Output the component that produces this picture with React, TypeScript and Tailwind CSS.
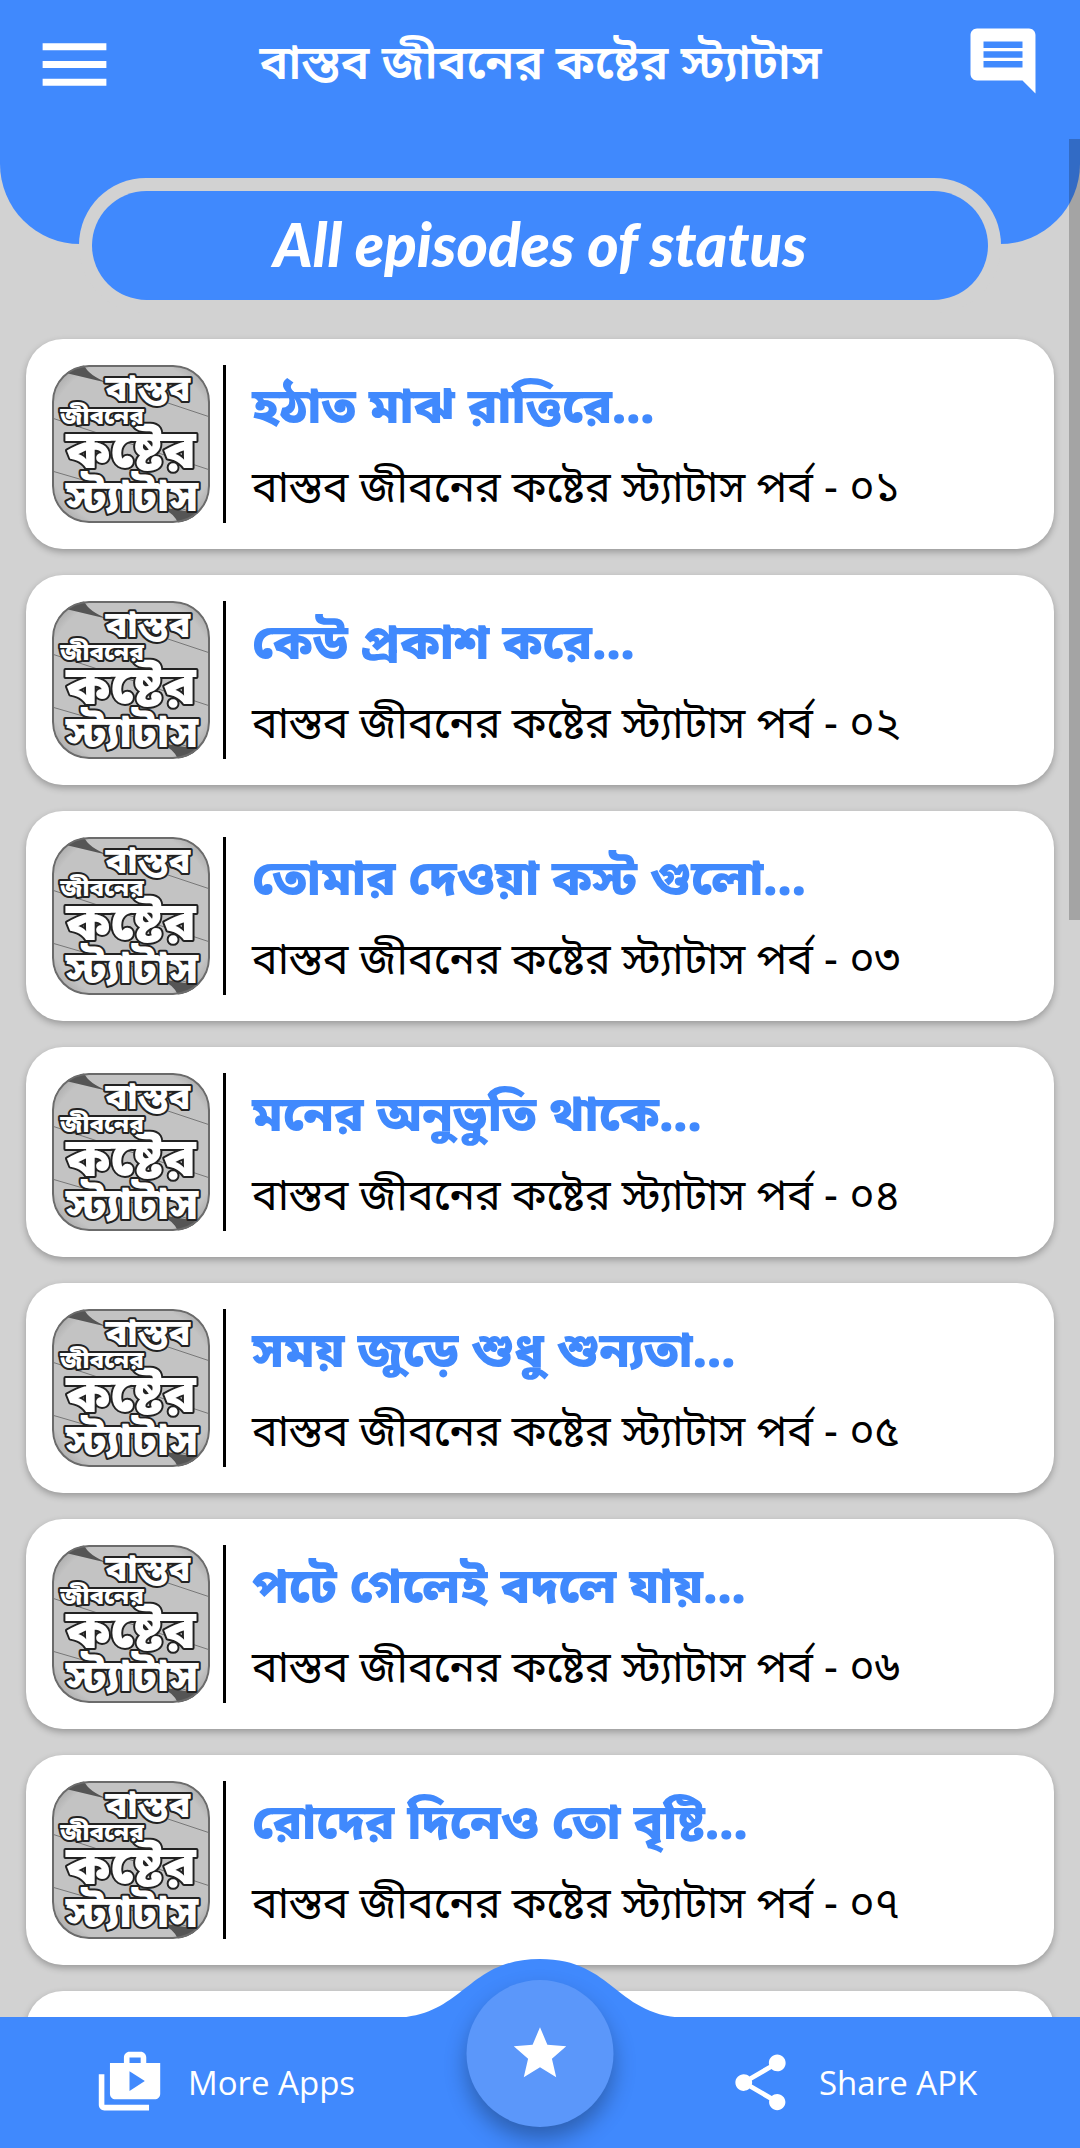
import { MdComment, MdMenu, MdShare, MdShop2, MdStar } from "react-icons/md";

interface Episode {
  id: number;
  title: string;
  no: string;
}

const episodes: Episode[] = [
  { id: 1, title: "হঠাত মাঝ রাত্তিরে...", no: "০১" },
  { id: 2, title: "কেউ প্রকাশ করে...", no: "০২" },
  { id: 3, title: "তোমার দেওয়া কস্ট গুলো...", no: "০৩" },
  { id: 4, title: "মনের অনুভুতি থাকে...", no: "০৪" },
  { id: 5, title: "সময় জুড়ে শুধু শুন্যতা...", no: "০৫" },
  { id: 6, title: "পটে গেলেই বদলে যায়...", no: "০৬" },
  { id: 7, title: "রোদের দিনেও তো বৃষ্টি...", no: "০৭" },
];

const cardClass =
  "h-[210px] rounded-[37px] bg-white p-[26px] shadow-[0_3px_7px_rgba(0,0,0,0.28)]";

const EpisodeLogo = () => (
  <svg viewBox="0 0 158 158" className="size-[158px] shrink-0" role="img">
    <defs>
      <clipPath id="logo-clip">
        <rect width="158" height="158" rx="37" />
      </clipPath>
      <radialGradient id="logo-shade" r="0.72">
        <stop offset="0.75" stopColor="#c3c3c3" />
        <stop offset="1" stopColor="#8d8d8d" />
      </radialGradient>
    </defs>
    <g clipPath="url(#logo-clip)">
      <rect width="158" height="158" fill="url(#logo-shade)" />
      <path d="M14 8 L32 0 Q36 10 56 18 L14 8Z" fill="#555" />
      <path d="M108 142 L146 148 L136 158 L126 158 Q122 148 108 142Z" fill="#555" />
      <path d="M0 53 L158 105 M0 106 L158 152 M80 26 L158 52" stroke="#777" strokeWidth="1" />
      <rect
        x="1"
        y="1"
        width="156"
        height="156"
        rx="36"
        fill="none"
        stroke="#6b6b6b"
        strokeWidth="2"
      />
      <g
        className="font-['Noto_Sans_Bengali','Noto_Sans',sans-serif] font-black"
        fill="#fff"
        stroke="#222"
        strokeWidth="4"
        strokeLinejoin="round"
        paintOrder="stroke"
        textAnchor="middle"
      >
        <text x="79" y="103" fontSize="54">কষ্টের</text>
        <text x="96" y="36" fontSize="36">বাস্তব</text>
        <text x="50" y="59" fontSize="24">জীবনের</text>
        <text x="80" y="146" fontSize="44">স্ট্যাটাস</text>
      </g>
    </g>
  </svg>
);

const EpisodeCard = ({ episode }: { episode: Episode }) => (
  <li className={cardClass}>
    <a href={`#episode-${episode.id}`} className="flex h-full">
      <EpisodeLogo />
      <div className="ml-[13px] w-[3px] shrink-0 bg-black" />
      <div className="ml-[26px] min-w-0 whitespace-nowrap">
        <h2 className="pt-1 text-[49px] leading-[84px] font-black text-[#4089fd]">
          {episode.title}
        </h2>
        <p className="text-[43px] leading-[78px] text-black">
          বাস্তব জীবনের কষ্টের স্ট্যাটাস পর্ব - {episode.no}
        </p>
      </div>
    </a>
  </li>
);

const App = () => {
  return (
    <div className="relative flex h-screen flex-col overflow-hidden bg-[#d2d2d2] font-['Noto_Sans_Bengali','Noto_Sans',sans-serif]">
      {/* Header */}
      <header className="h-[244px] shrink-0 rounded-b-[80px] bg-[#4089fd] text-white">
        <div className="flex items-start justify-between pt-[22px] pr-[38px] pl-8">
          <button type="button" aria-label="Menu">
            <MdMenu className="size-[85px]" />
          </button>
          <h1 className="text-[48px] leading-[90px] font-semibold whitespace-nowrap">
            বাস্তব জীবনের কষ্টের স্ট্যাটাস
          </h1>
          <button type="button" aria-label="Comments">
            <MdComment className="size-[78px]" />
          </button>
        </div>
      </header>

      {/* Section label, sits over the bottom edge of the header */}
      <div className="relative mx-[79px] -mt-[66px] shrink-0 rounded-[67px] bg-[#d2d2d2] p-[13px]">
        <div className="flex h-[109px] items-center justify-center rounded-full bg-[#4089fd] pb-1">
          <p className="font-['Lato',sans-serif] text-[60px] leading-[64px] font-black text-white italic">
            All episodes of status
          </p>
        </div>
      </div>

      {/* Episodes */}
      <ul className="mt-[26px] flex flex-col gap-[26px] px-[26px]">
        {episodes.map((episode) => (
          <EpisodeCard key={episode.id} episode={episode} />
        ))}
        <li className={cardClass} />
      </ul>

      {/* Scroll thumb */}
      <div className="absolute top-[139px] right-0 h-[781px] w-[11px] bg-black/22" />

      {/* Bottom bar */}
      <nav className="absolute inset-x-0 bottom-0 flex h-[131px] items-center bg-[#4089fd] text-white">
        <svg
          viewBox="0 0 300 60"
          className="absolute bottom-[130px] left-1/2 h-[60px] w-[300px] -translate-x-1/2"
        >
          <path
            d="M0 60 C75 60 75 1 150 1 C225 1 225 60 300 60Z"
            fill="#4089fd"
          />
        </svg>
        <a href="#more-apps" className="flex w-1/2 items-center gap-[25px] pl-24">
          <MdShop2 className="size-[67px]" />
          <span className="font-['Open_Sans',sans-serif] text-[33px] leading-[48px]">More Apps</span>
        </a>
        <button
          type="button"
          aria-label="Rate"
          className="absolute bottom-[21px] left-1/2 flex size-[147px] -translate-x-1/2 items-center justify-center rounded-full bg-[#5b97fa] shadow-[0_12px_22px_rgba(0,0,0,0.3)]"
        >
          <MdStar className="size-[63px]" />
        </button>
        <a href="#share" className="flex w-1/2 items-center gap-[25px] pl-[187px]">
          <MdShare className="size-[67px]" />
          <span className="font-['Open_Sans',sans-serif] text-[33px] leading-[48px]">Share APK</span>
        </a>
      </nav>
    </div>
  );
};

export default App;
